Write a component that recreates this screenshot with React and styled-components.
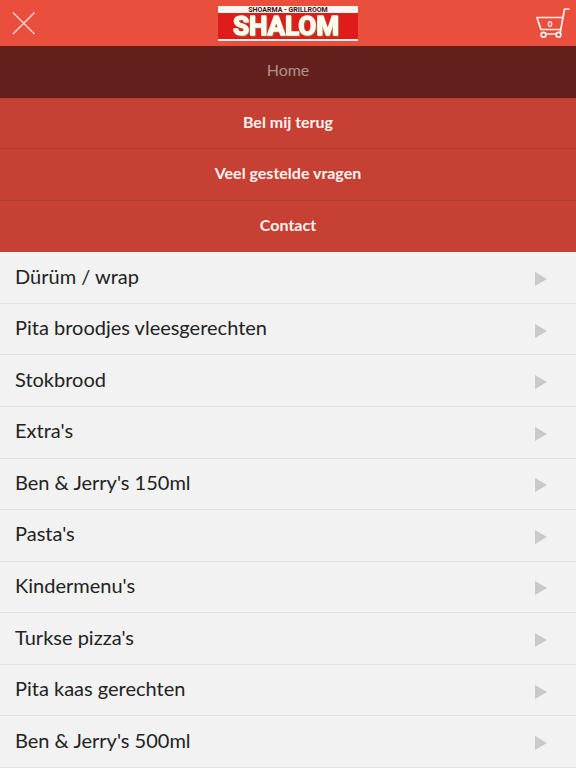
import React from "react";
import styled, { createGlobalStyle, css } from "styled-components";

const GlobalStyle = createGlobalStyle`
  * { box-sizing: border-box; }
  body { margin: 0; background: #f2f2f2; font-family: Lato, "Open Sans", sans-serif; }
`;

const Page = styled.div`
  min-height: 100vh;
  display: flex;
  flex-direction: column;
`;

const Header = styled.header`
  height: 46px;
  display: grid;
  grid-template-columns: 1fr auto 1fr;
  align-items: center;
  background: #ea4e3d;
`;

const IconButton = styled.button`
  display: flex;
  justify-self: ${(p) => (p.$end ? "end" : "start")};
  padding: ${(p) => (p.$end ? "0 4px 0 0" : "0 0 0 12px")};
  border: 0;
  background: none;
  cursor: pointer;
`;

const LogoLink = styled.a`
  display: flex;
  padding-top: 1px;
`;

const Menu = styled.main`
  flex: 1;
  display: grid;
  grid-auto-rows: minmax(48px, 1fr);
`;

const rowBase = css`
  display: flex;
  align-items: center;
  text-decoration: none;
`;

const NavLink = styled.a`
  ${rowBase}
  justify-content: center;
  padding-bottom: 3px;
  border-bottom: 1px solid ${(p) => (p.$active ? "#57201a" : "#b93b30")};
  background: ${(p) =>
    p.$active
      ? "repeating-conic-gradient(#601f1a 0 25%, #66211c 0 50%) 0 0 / 2px 2px"
      : "#c64034"};
  color: ${(p) => (p.$active ? "#b1908d" : "#fff3f0")};
  font-size: 16px;
  font-weight: ${(p) => (p.$active ? 400 : 700)};

  &:nth-of-type(4) {
    border-bottom-color: #c64034;
  }
`;

const CategoryLink = styled.a`
  ${rowBase}
  justify-content: space-between;
  padding: 0 29px 0 15px;
  border-bottom: 1px solid #e0e0e0;
  background: #f2f2f2;
  color: #222;
  font-size: 20px;
`;

const CategoryName = styled.span`
  padding-bottom: 4px;
`;

const Arrow = styled.span`
  margin-top: 3px;
  border-style: solid;
  border-width: 7px 0 7px 12px;
  border-color: transparent transparent transparent #c9c9c9;
`;

const navItems = ["Home", "Bel mij terug", "Veel gestelde vragen", "Contact"];

const categories = [
  "Dürüm / wrap",
  "Pita broodjes vleesgerechten",
  "Stokbrood",
  "Extra's",
  "Ben & Jerry's 150ml",
  "Pasta's",
  "Kindermenu's",
  "Turkse pizza's",
  "Pita kaas gerechten",
  "Ben & Jerry's 500ml",
];

const LogoTitle = styled.text`
  font: 700 26px Roboto, sans-serif;
  fill: #fffbed;
  stroke: #fffbed;
  stroke-width: 1.5px;
  stroke-linejoin: round;
  text-anchor: middle;
  filter: drop-shadow(1px 1px 0 #8f7045);
`;

const LogoTagline = styled.text`
  font: 700 7px Roboto, sans-serif;
  fill: #3a1414;
  text-anchor: middle;
`;

function CloseIcon() {
  return (
    <svg width="24" height="24" viewBox="0 0 24 24" fill="none" stroke="#ffd2c9" strokeWidth="1.5" aria-hidden="true">
      <path d="M1 1.5 22.5 23M22.5 1.5 1 23" />
    </svg>
  );
}

function CartIcon() {
  return (
    <svg width="36" height="32" viewBox="0 0 36 32" fill="none" stroke="#fff0ec" strokeWidth="1.7" strokeLinejoin="round" aria-hidden="true">
      <path d="M33.5 2H28.5L24 27H7.5M26.8 10.5H.9L5 22.5H24.8" />
      <circle cx="7.5" cy="27.8" r="2.4" fill="#ea4e3d" />
      <circle cx="22.5" cy="27.8" r="2.4" fill="#ea4e3d" />
      <text x="14" y="19.5" textAnchor="middle" fontFamily="Lato, sans-serif" fontSize="8" fontWeight="900" fill="#fff" stroke="none">
        0
      </text>
    </svg>
  );
}

function Logo() {
  return (
    <svg width="142" height="36" viewBox="0 0 142 36" role="img" aria-label="Shoarma - Grillroom Shalom">
      <rect x="1" width="140" height="35" fill="#fff4ef" />
      <rect x="1" y="7" width="140" height="26" fill="#df1c1a" />
      <LogoTagline x="71" y="6">SHOARMA - GRILLROOM</LogoTagline>
      <LogoTitle x="69" y="29">SHALOM</LogoTitle>
    </svg>
  );
}

export default function App() {
  return (
    <>
      <GlobalStyle />
      <Page>
        <Header>
          <IconButton type="button" aria-label="Menu sluiten">
            <CloseIcon />
          </IconButton>
          <LogoLink href="#home">
            <Logo />
          </LogoLink>
          <IconButton type="button" aria-label="Winkelwagen" $end>
            <CartIcon />
          </IconButton>
        </Header>
        <Menu>
          {navItems.map((name, i) => (
            <NavLink key={name} href="#" $active={i === 0}>
              {name}
            </NavLink>
          ))}
          {categories.map((name) => (
            <CategoryLink key={name} href="#">
              <CategoryName>{name}</CategoryName>
              <Arrow />
            </CategoryLink>
          ))}
        </Menu>
      </Page>
    </>
  );
}
